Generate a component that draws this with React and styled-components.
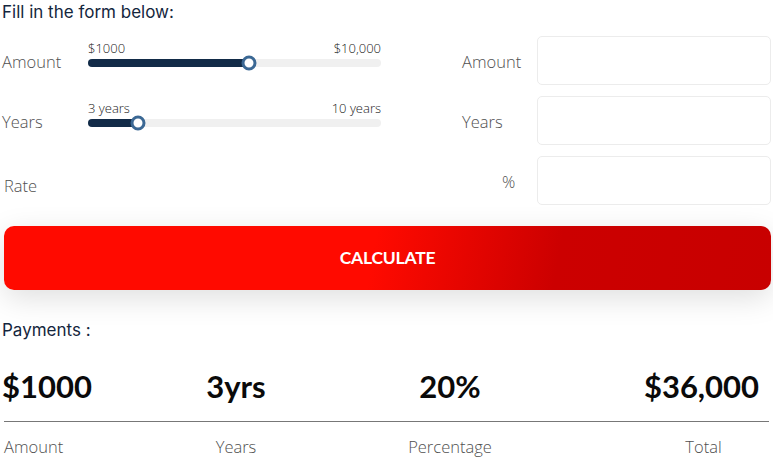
import React, { useState } from 'react';
import styled, { createGlobalStyle } from 'styled-components';

const GlobalStyle = createGlobalStyle`
  html, body {
    margin: 0;
    padding: 0;
    background: #fff;
  }
  body {
    font-family: "Open Sans", "Liberation Sans", sans-serif;
  }
`;

function App() {
  const [amount, setAmount] = useState(55);
  const [years, setYears] = useState(17);

  return (
    <Page>
      <GlobalStyle />
      <Title>Fill in the form below:</Title>
      <Form>
        <Label>Amount</Label>
        <Slider min="$1000" max="$10,000" value={amount} onChange={setAmount} />
        <SideLabel>Amount</SideLabel>
        <Field />

        <Label>Years</Label>
        <Slider min="3 years" max="10 years" value={years} onChange={setYears} />
        <SideLabel>Years</SideLabel>
        <Field />

        <Label $low>Rate</Label>
        <div />
        <SideLabel $indent={121}>%</SideLabel>
        <Field />
      </Form>

      <Button type="button">CALCULATE</Button>

      <Title>Payments :</Title>
      <Stats>
        <Value>$1000</Value>
        <Value $center>3yrs</Value>
        <Value $center>20%</Value>
        <Value $center $last>$36,000</Value>
        <Divider />
        <StatLabel>Amount</StatLabel>
        <StatLabel $center>Years</StatLabel>
        <StatLabel $center>Percentage</StatLabel>
        <StatLabel $center $last>Total</StatLabel>
      </Stats>
    </Page>
  );
}

function Slider({ min, max, value }) {
  return (
    <SliderBox>
      <SliderLabels>
        <span>{min}</span>
        <span>{max}</span>
      </SliderLabels>
      <Track>
        <Fill style={{ width: `${value}%` }} />
        <Thumb style={{ left: `${value}%` }} />
      </Track>
    </SliderBox>
  );
}

const Page = styled.div`
  padding: 0 2px 0 2px;
  width: 769px;
`;

const Title = styled.div`
  font-family: "Inter", sans-serif;
  font-size: 17px;
  line-height: 24px;
  color: #14263d;
`;

const Form = styled.div`
  display: grid;
  grid-template-columns: 86px 293px 1fr 234px;
  grid-auto-rows: 49px;
  row-gap: 11px;
  margin-top: 12px;
`;

const Label = styled.div`
  align-self: center;
  font-size: 16.5px;
  font-weight: 300;
  color: #505050;
  padding-left: ${p => (p.$low ? '2px' : '0')};
  padding-top: ${p => (p.$low ? '9px' : '1px')};
`;

const SideLabel = styled(Label)`
  padding-left: ${p => (p.$indent ? p.$indent : 81)}px;
  padding-top: 1px;
`;

const Field = styled.input`
  border: 1px solid #ececec;
  border-radius: 5px;
  background: #fff;
  outline: none;
  box-sizing: border-box;
  height: 49px;
`;

const SliderBox = styled.div`
  align-self: start;
  margin-top: 5px;
  display: flex;
  flex-direction: column;
  gap: 3px;
`;

const SliderLabels = styled.div`
  display: flex;
  justify-content: space-between;
  font-size: 13px;
  font-weight: 300;
  line-height: 15px;
  color: #1a1a1a;
`;

const Track = styled.div`
  position: relative;
  height: 8px;
  border-radius: 4px;
  background: #f0f0f0;
`;

const Fill = styled.div`
  height: 100%;
  border-radius: 4px;
  background: #122b48;
`;

const Thumb = styled.div`
  position: absolute;
  top: 50%;
  width: 15px;
  height: 15px;
  box-sizing: border-box;
  border-radius: 50%;
  border: 3px solid #3b6894;
  background: #fff;
  transform: translate(-50%, -50%);
`;

const Button = styled.button`
  display: block;
  width: 767px;
  height: 64px;
  margin: 21px 0 28px 2px;
  padding-bottom: 3px;
  border: none;
  border-radius: 10px;
  background: linear-gradient(100deg, #ff0a00 0%, #ff0a00 48%, #cc0000 72%, #c80000 100%);
  box-shadow: 0 8px 30px rgba(0, 0, 0, 0.13);
  color: #fff;
  font-family: "Lato", sans-serif;
  font-weight: 700;
  font-size: 17.5px;
  letter-spacing: -0.2px;
  cursor: pointer;
`;

const Stats = styled.div`
  display: grid;
  grid-template-columns: 92px 284px 144px 1fr;
  margin-top: 14px;
`;

const Value = styled.div`
  font-family: "Lato", sans-serif;
  font-weight: 700;
  font-size: 31px;
  line-height: 56px;
  padding-top: 2px;
  color: #0a0a0a;
  text-align: ${p => (p.$center ? 'center' : 'left')};
  padding-left: ${p => (p.$last ? '110px' : '0')};
  white-space: nowrap;
`;

const Divider = styled.div`
  grid-column: 1 / -1;
  height: 1px;
  background: #777;
  margin: 7px 2px 13px 2px;
`;

const StatLabel = styled.div`
  font-size: 16.5px;
  font-weight: 300;
  color: #505050;
  line-height: 24px;
  padding-left: ${p => (p.$last ? '114px' : p.$center ? '0' : '2px')};
  text-align: ${p => (p.$center ? 'center' : 'left')};
`;

export default App;
